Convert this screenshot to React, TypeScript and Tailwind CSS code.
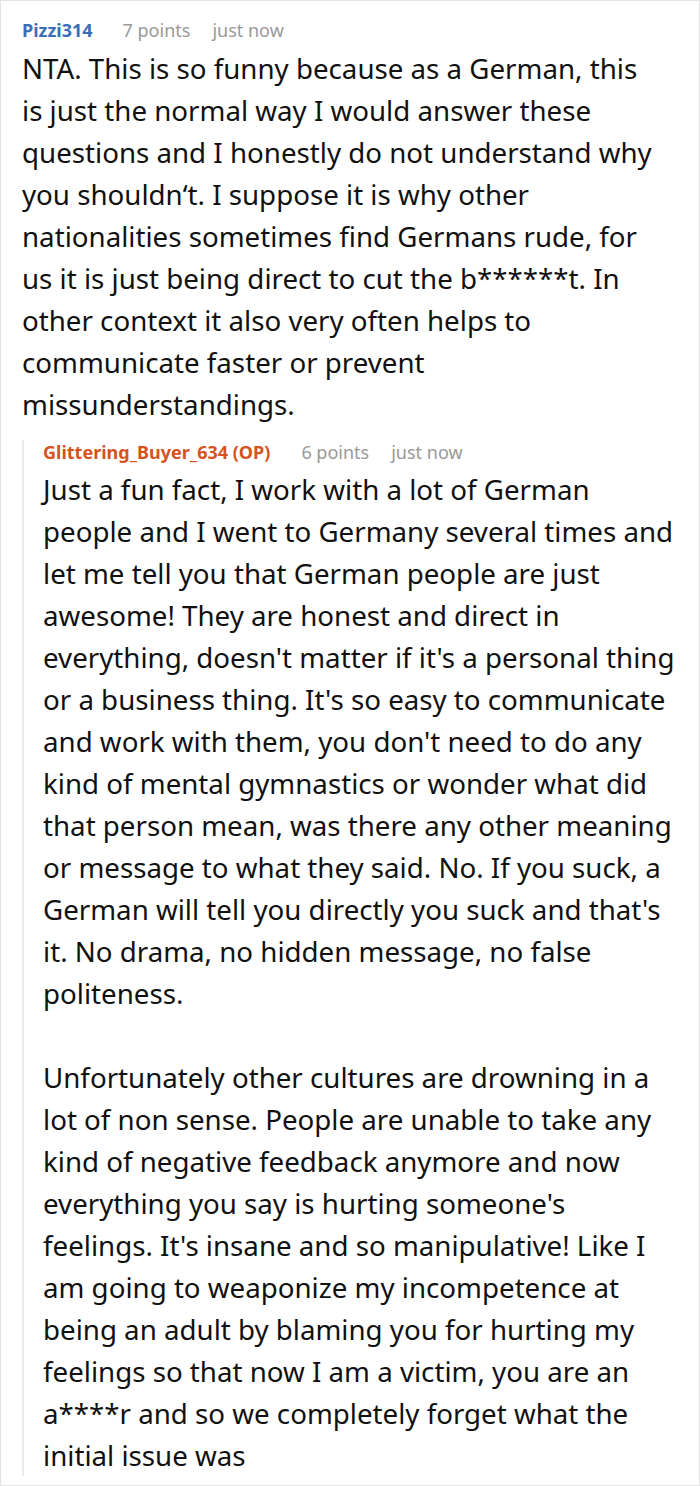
export default function App() {
  return (
    <div
      className="w-[700px] h-[1486px] overflow-hidden border border-[#e3e3e3] bg-white pl-[21px] pr-[18px] pt-[17px]"
      style={{ fontFamily: '"Noto Sans", "Open Sans", sans-serif' }}
    >
      <div className="flex items-center text-[18px] leading-[24px]">
        <span className="font-bold text-[#3a6fb8]">Pizzi314</span>
        <span className="ml-[30px] text-[#999999]">7 points</span>
        <span className="ml-[22px] text-[#999999]">just now</span>
      </div>
      <p className="mt-[5px] w-[638px] text-[27.7px] leading-[42px] text-[#111111]">
        NTA. This is so funny because as a German, this is just the normal way
        I would answer these questions and I honestly do not understand why you
        shouldn‘t. I suppose it is why other nationalities sometimes find
        Germans rude, for us it is just being direct to cut the b******t. In
        other context it also very often helps to communicate faster or
        prevent missunderstandings.
      </p>

      <div className="mt-[26px] w-[659px] border-l-2 border-[#ebebeb] pl-[19px]">
        <div className="-mt-[11px] flex items-center text-[18px] leading-[24px]">
          <span className="font-bold text-[#d4531f]">
            Glittering_Buyer_634 (OP)
          </span>
          <span className="ml-[31px] text-[#999999]">6 points</span>
          <span className="ml-[22px] text-[#999999]">just now</span>
        </div>
        <div className="mt-[4px] -mb-[15px] text-[27.7px] leading-[42px] text-[#111111]">
          <p>
            Just a fun fact, I work with a lot of German people and I went to
            Germany several times and let me tell you that German people are
            just awesome! They are honest and direct in everything, doesn't
            matter if it's a personal thing or a business thing. It's so easy
            to communicate and work with them, you don't need to do any kind of
            mental gymnastics or wonder what did that person mean, was there
            any other meaning or message to what they said. No. If you suck, a
            German will tell you directly you suck and that's it. No drama, no
            hidden message, no false politeness.
          </p>
          <p className="mt-[42px]">
            Unfortunately other cultures are drowning in a lot of non sense.
            People are unable to take any kind of negative feedback anymore and
            now everything you say is hurting someone's feelings. It's insane
            and so manipulative! Like I am going to weaponize my incompetence
            at being an adult by blaming you for hurting my feelings so that now
            I am a victim, you are an a****r and so we completely forget what
            the initial issue was
          </p>
        </div>
      </div>
    </div>
  );
}
